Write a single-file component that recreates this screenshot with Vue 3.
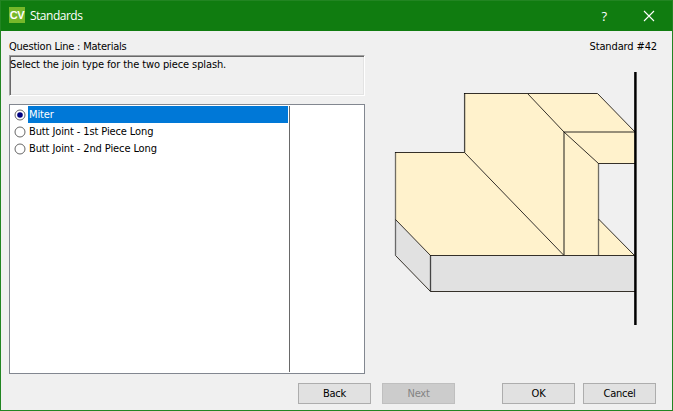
<script setup>
import { ref } from 'vue'

const options = ['Miter', 'Butt Joint - 1st Piece Long', 'Butt Joint - 2nd Piece Long']
const selected = ref(0)
</script>

<template>
  <div class="window">
    <header class="titlebar">
      <span class="logo">CV</span>
      <span class="title">Standards</span>
      <span class="help">?</span>
      <svg class="close" width="12" height="12" viewBox="0 0 12 12">
        <path d="M1 1L11 11M11 1L1 11" stroke="#fff" stroke-width="1.1" fill="none" />
      </svg>
    </header>
    <main class="content">
      <section class="left">
        <div class="caption question">Question Line : Materials</div>
        <div class="prompt">Select the join type for the two piece splash.</div>
        <div class="list">
          <div class="rows">
            <div
              v-for="(option, i) in options"
              :key="option"
              class="row"
              :class="{ active: selected === i }"
              @click="selected = i"
            >
              <svg class="radio" width="12" height="12" viewBox="0 0 12 12">
                <circle cx="6" cy="6" r="5" fill="#fff" stroke="#666" stroke-width="1" />
                <circle v-if="selected === i" cx="6" cy="6" r="2.8" fill="#000080" />
              </svg>
              <span class="label">{{ option }}</span>
            </div>
          </div>
          <div class="detail"></div>
        </div>
      </section>
      <section class="right">
        <div class="caption end">Standard #42</div>
        <svg class="drawing" width="260" height="266" viewBox="385 65 260 266">
          <g fill="#fff2cc">
            <path d="M395.5 152.5H464.5L563.5 255.5H430.5L395.5 219.5Z" />
            <path d="M464.5 93.5H597.5L635 132V163.5H598.5V255.5H563.5L464.5 152.5Z" />
            <path d="M598.5 219L634.5 255.5H598.5Z" />
          </g>
          <g fill="#e1e1e1">
            <path d="M395.5 219.5L430.5 255.5V291.5L395.5 255.5Z" />
            <path d="M430.5 255.5H635V291.5H430.5Z" />
          </g>
          <g fill="none" stroke="#353029" stroke-width="1">
            <path d="M395 152.5H464.5L564 255.5M464 93.5H597.5L635 132" />
            <path d="M527.5 93.5L564 132L598.5 163.5H635" />
            <path d="M598.5 219L634.5 255.5" />
            <path d="M395.5 219.5L430.5 255.5H635M395.5 255.5L430.5 291.5H635" />
          </g>
          <g fill="none" stroke="#000" stroke-opacity="0.55">
            <path d="M564 132H635M564 132V255" stroke-width="1.6" />
            <path d="M395.5 152V255.5M598.5 163V255" stroke-width="1.3" />
            <path d="M464.6 93V152.5M430.5 255V291.5" stroke-width="1.3" stroke-opacity="0.7" />
          </g>
          <path d="M635.4 72V325" stroke="#000" stroke-width="2.5" />
        </svg>
      </section>
    </main>
    <footer class="actions">
      <button class="btn">Back</button>
      <button class="btn next" disabled>Next</button>
      <button class="btn ok">OK</button>
      <button class="btn cancel">Cancel</button>
    </footer>
  </div>
</template>

<style>
body {
  margin: 0;
}
</style>

<style scoped>
.window {
  box-sizing: border-box;
  width: 673px;
  height: 411px;
  border: 1px solid #228522;
  background: #f0f0f0;
  display: flex;
  flex-direction: column;
  overflow: hidden;
  color: #000;
  font-family: "DejaVu Sans Condensed", "DejaVu Sans", sans-serif;
  font-stretch: condensed;
  font-size: 11px;
  line-height: 14px;
  letter-spacing: -0.11px;
  white-space: nowrap;
}
.titlebar {
  height: 30px;
  flex: none;
  display: flex;
  align-items: center;
  background: #107c10;
  color: #fff;
  padding: 0 17px 0 8px;
  box-sizing: border-box;
}
.logo {
  width: 16px;
  height: 16px;
  margin-top: -2px;
  background: #76b82a;
  font: bold 11px/16px "Liberation Sans", sans-serif;
  letter-spacing: -0.5px;
  text-align: center;
}
.title {
  margin-left: 5px;
  font: 12px/16px "Open Sans", sans-serif;
  letter-spacing: -0.5px;
}
.help {
  margin-left: auto;
  margin-right: 36px;
  font: 13px/16px "Open Sans", sans-serif;
  margin-top: -1px;
}
.close {
  margin-top: -1px;
}
.content {
  flex: none;
  height: 343px;
  display: flex;
  justify-content: space-between;
  padding: 0 14px 0 8px;
}
.left {
  width: 356px;
}
.right {
  width: 263px;
}
.caption {
  height: 15px;
  padding-top: 9px;
}
.question {
  letter-spacing: -0.22px;
}
.end {
  text-align: right;
  letter-spacing: -0.13px;
  padding-right: 1px;
}
.prompt {
  box-sizing: border-box;
  height: 41px;
  border: 1px solid;
  border-color: #a0a0a0 #fff #fff #a0a0a0;
  box-shadow: inset 1px 1px #696969, inset -1px -1px #e3e3e3;
  padding-top: 2px;
}
.list {
  box-sizing: border-box;
  height: 270px;
  margin-top: 8px;
  border: 1px solid #828790;
  background: #fff;
  display: flex;
  padding: 1px 1px 1px 3px;
}
.rows {
  width: 276px;
  border-right: 1px solid #696969;
}
.row {
  height: 17px;
  display: flex;
  align-items: center;
}
.radio {
  flex: none;
  margin-left: 0.5px;
}
.label {
  width: 260px;
  height: 17px;
  box-sizing: border-box;
  margin-left: 2.5px;
  padding: 2px 0 0 1px;
}
.active .label {
  background: #0078d7;
  color: #fff;
}
.detail {
  flex: 1;
}
.drawing {
  display: block;
  margin-left: -10px;
  margin-top: 10px;
}
.actions {
  flex: none;
  display: flex;
  justify-content: flex-end;
  padding: 9px 16px 0 0;
}
.btn {
  box-sizing: border-box;
  width: 73px;
  height: 21px;
  margin: 0;
  padding: 1px 0 0;
  border: 1px solid #adadad;
  background: #e1e1e1;
  color: #000;
  font: inherit;
  letter-spacing: -0.25px;
}
.next {
  margin-left: 11px;
  border-color: #bfbfbf;
  background: #ccc;
  color: #838383;
}
.ok {
  margin-left: 47px;
}
.cancel {
  margin-left: 8px;
}
</style>
